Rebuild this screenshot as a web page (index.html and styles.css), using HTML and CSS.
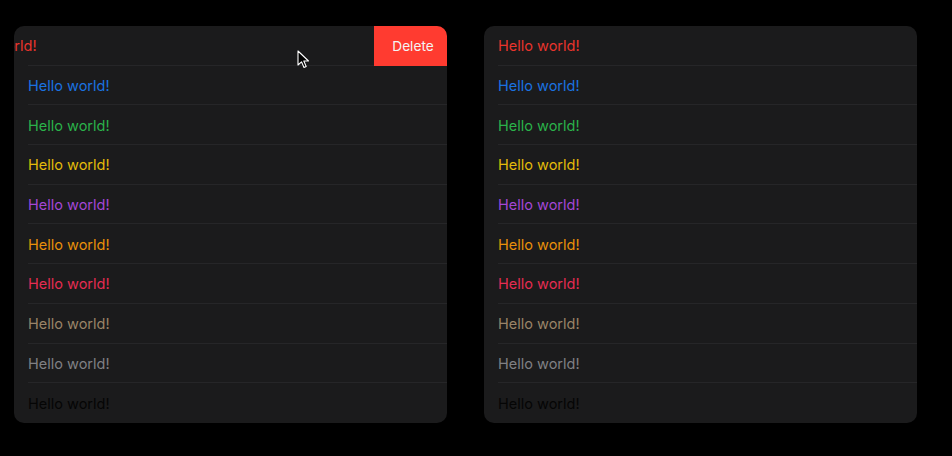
FILE: index.html
```html
<!DOCTYPE html>
<html>
<head>
<meta charset="utf-8">
<link rel="stylesheet" href="styles.css">
</head>
<body>
<div class="page">
  <div class="card">
    <div class="row swiped">
      <div class="row-content shifted"><span class="t red">Hello world!</span></div>
      <div class="delete">Delete</div>
    </div>
    <div class="row"><div class="row-content"><span class="t blue">Hello world!</span></div></div>
    <div class="row"><div class="row-content"><span class="t green">Hello world!</span></div></div>
    <div class="row"><div class="row-content"><span class="t yellow">Hello world!</span></div></div>
    <div class="row"><div class="row-content"><span class="t purple">Hello world!</span></div></div>
    <div class="row"><div class="row-content"><span class="t orange">Hello world!</span></div></div>
    <div class="row"><div class="row-content"><span class="t pink">Hello world!</span></div></div>
    <div class="row"><div class="row-content"><span class="t brown">Hello world!</span></div></div>
    <div class="row"><div class="row-content"><span class="t gray">Hello world!</span></div></div>
    <div class="row last"><div class="row-content"><span class="t black">Hello world!</span></div></div>
    <svg class="cursor" width="13" height="19" viewBox="0 0 13 19"><path d="M1 1 L1 15 L4.5 11.8 L7 17.5 L9.2 16.5 L6.8 11 L11.5 11 Z" fill="#000" stroke="#fff" stroke-width="1.1" stroke-linejoin="round"/></svg>
  </div>
  <div class="card">
    <div class="row"><div class="row-content"><span class="t red">Hello world!</span></div></div>
    <div class="row"><div class="row-content"><span class="t blue">Hello world!</span></div></div>
    <div class="row"><div class="row-content"><span class="t green">Hello world!</span></div></div>
    <div class="row"><div class="row-content"><span class="t yellow">Hello world!</span></div></div>
    <div class="row"><div class="row-content"><span class="t purple">Hello world!</span></div></div>
    <div class="row"><div class="row-content"><span class="t orange">Hello world!</span></div></div>
    <div class="row"><div class="row-content"><span class="t pink">Hello world!</span></div></div>
    <div class="row"><div class="row-content"><span class="t brown">Hello world!</span></div></div>
    <div class="row"><div class="row-content"><span class="t gray">Hello world!</span></div></div>
    <div class="row last"><div class="row-content"><span class="t black">Hello world!</span></div></div>
  </div>
</div>
</body>
</html>
```
FILE: styles.css
```css
html, body {
  margin: 0;
  padding: 0;
  background: #000;
}
body {
  font-family: Inter, "Liberation Sans", sans-serif;
  width: 952px;
  height: 456px;
  overflow: hidden;
}
.page {
  display: flex;
  gap: 37px;
  padding: 26px 0 0 14px;
}
.card {
  position: relative;
  width: 433px;
  height: 397px;
  background: #1b1b1c;
  border-radius: 10px;
  overflow: hidden;
  display: flex;
  flex-direction: column;
}
.row {
  position: relative;
  height: 39.7px;
  flex: none;
  display: flex;
}
.row::after {
  content: "";
  position: absolute;
  left: 14px;
  right: 0;
  bottom: 0;
  height: 1px;
  background: #262628;
}
.row.last::after { display: none; }
.row-content {
  flex: 1;
  display: flex;
  align-items: center;
  padding-left: 14px;
}
.shifted {
  transform: translateX(-73px);
}
.delete {
  position: absolute;
  right: 0;
  top: 0;
  width: 73px;
  height: 100%;
  box-sizing: border-box;
  padding-left: 5px;
  background: #ff3b30;
  color: #f4f4f4;
  font-size: 13.7px;
  display: flex;
  align-items: center;
  justify-content: center;
  z-index: 1;
}
.t {
  font-size: 14.5px;
  white-space: nowrap;
}
.red { color: #e8342c; }
.blue { color: #1a72e0; }
.green { color: #2ab24a; }
.yellow { color: #e3bb0a; }
.purple { color: #a447d6; }
.orange { color: #e8900a; }
.pink { color: #e52c52; }
.brown { color: #9a8468; }
.gray { color: #808084; }
.black { color: #050505; }
.cursor {
  position: absolute;
  left: 283px;
  top: 24px;
  z-index: 2;
}
```
